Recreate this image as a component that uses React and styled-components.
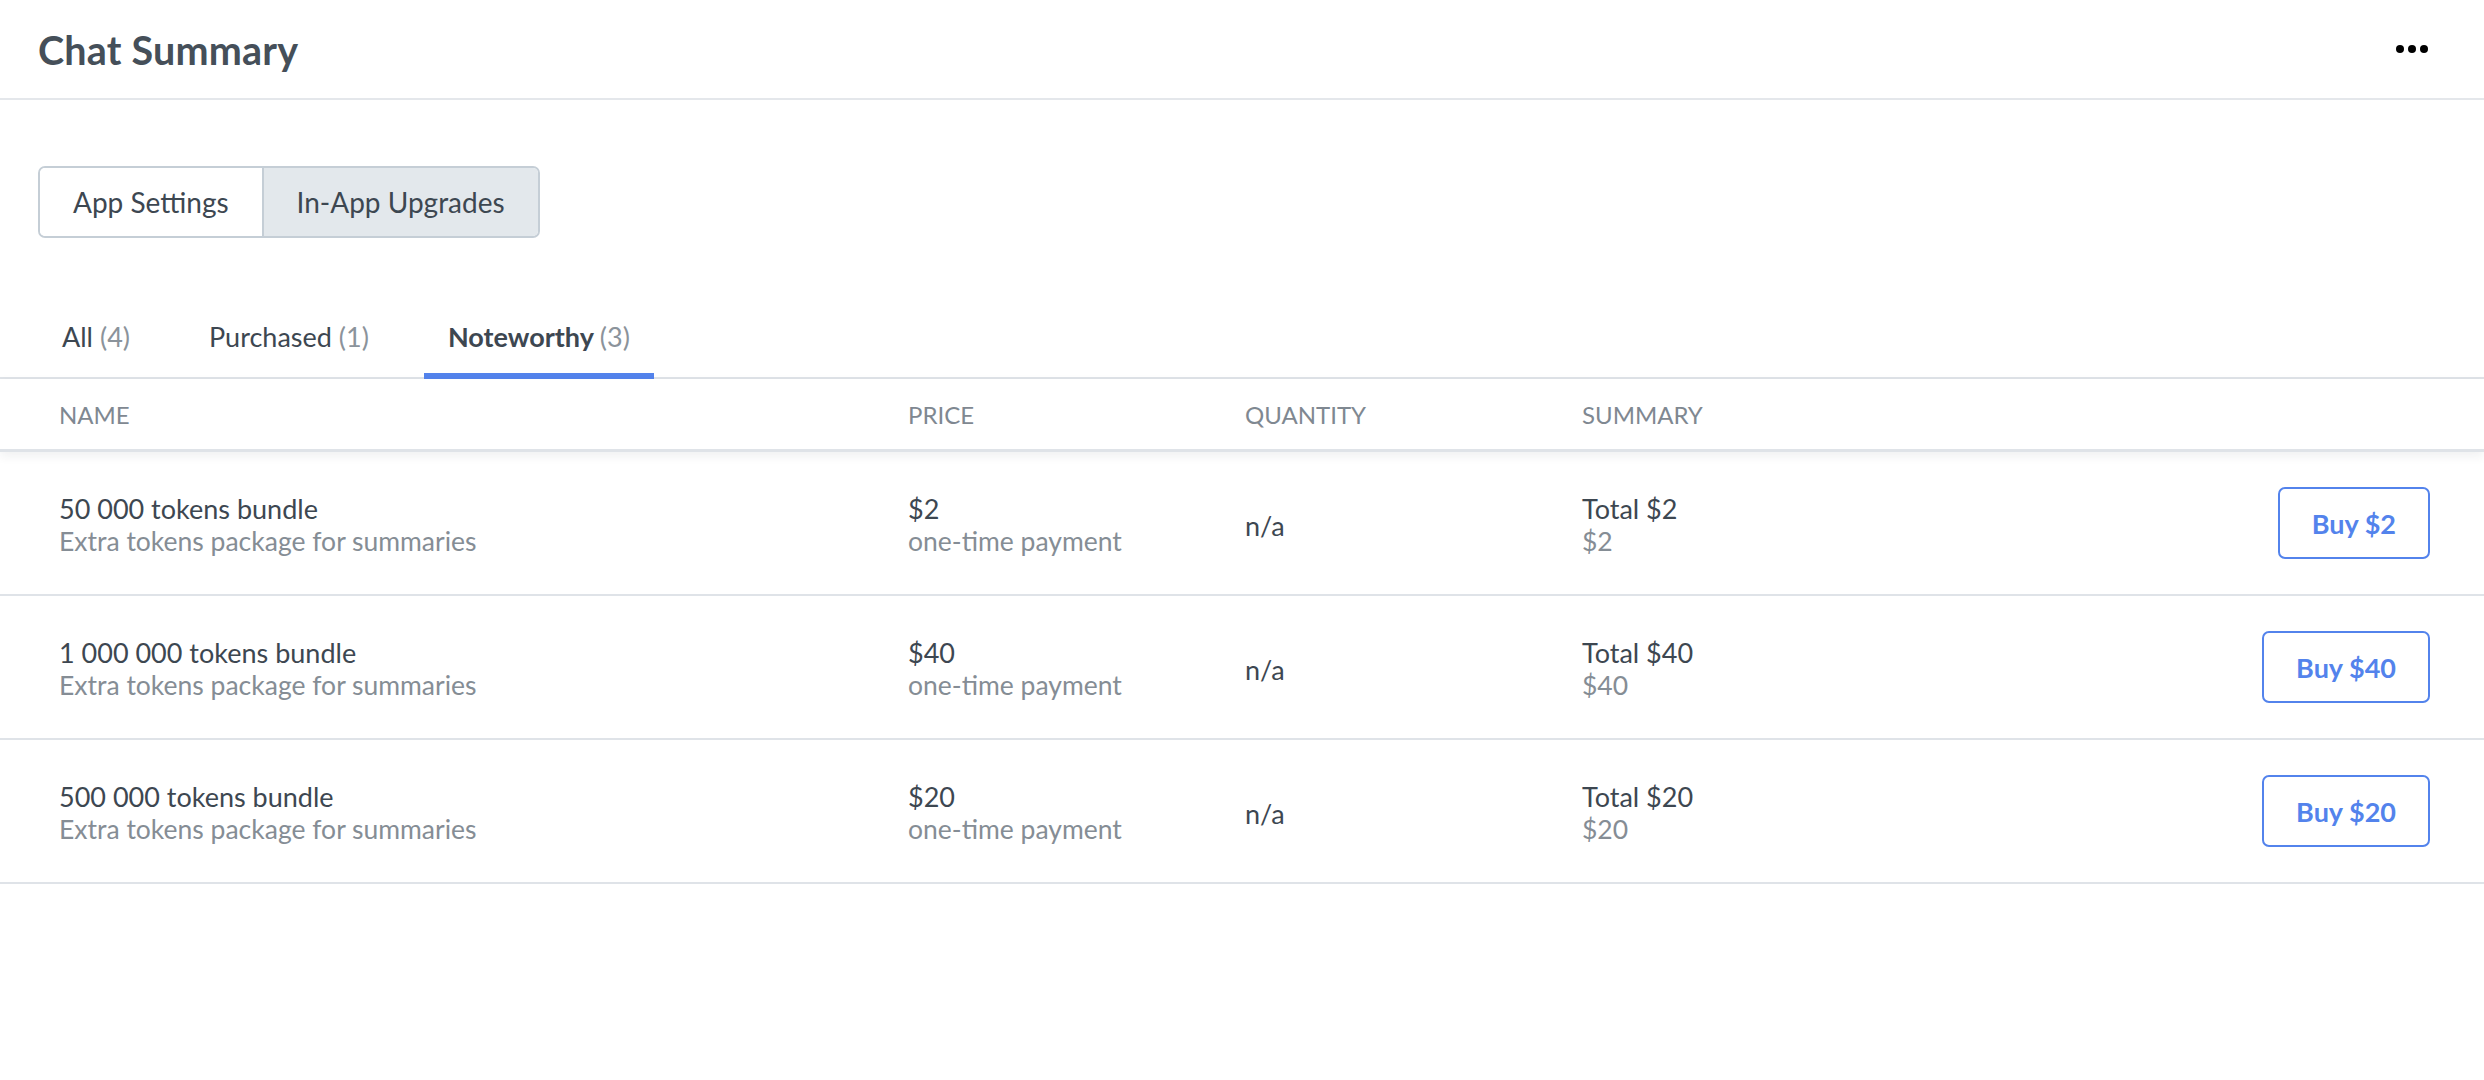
import React, { useState } from 'react';
import styled, { createGlobalStyle } from 'styled-components';

const GlobalStyle = createGlobalStyle`
  body {
    margin: 0;
    background: #ffffff;
    font-family: Lato, "Open Sans", sans-serif;
    color: #3d4751;
  }
`;

const upgrades = [
  { id: 1, name: '50 000 tokens bundle', price: '$2' },
  { id: 2, name: '1 000 000 tokens bundle', price: '$40' },
  { id: 3, name: '500 000 tokens bundle', price: '$20' },
];

const tabs = [
  { key: 'all', label: 'All', count: 4 },
  { key: 'purchased', label: 'Purchased', count: 1 },
  { key: 'noteworthy', label: 'Noteworthy', count: 3 },
];

const DotsIcon = () => (
  <svg width="32" height="8" viewBox="0 0 32 8">
    <circle cx="4" cy="4" r="4" fill="#000" />
    <circle cx="16" cy="4" r="4" fill="#000" />
    <circle cx="28" cy="4" r="4" fill="#000" />
  </svg>
);

const App = () => {
  const [section, setSection] = useState('upgrades');
  const [tab, setTab] = useState('noteworthy');

  return (
    <Page>
      <GlobalStyle />
      <TopBar>
        <Title>Chat Summary</Title>
        <MenuButton aria-label="More">
          <DotsIcon />
        </MenuButton>
      </TopBar>

      <Segments>
        <Segment active={section === 'settings'} onClick={() => setSection('settings')}>
          App Settings
        </Segment>
        <Segment active={section === 'upgrades'} onClick={() => setSection('upgrades')}>
          In-App Upgrades
        </Segment>
      </Segments>

      <TabBar>
        {tabs.map((t) => (
          <Tab key={t.key} active={tab === t.key} onClick={() => setTab(t.key)}>
            {t.label} <Count>({t.count})</Count>
          </Tab>
        ))}
      </TabBar>

      <HeaderRow>
        <HeadCell>Name</HeadCell>
        <HeadCell>Price</HeadCell>
        <HeadCell>Quantity</HeadCell>
        <HeadCell>Summary</HeadCell>
        <span />
      </HeaderRow>

      {upgrades.map((item) => (
        <Row key={item.id}>
          <Cell>
            <Main>{item.name}</Main>
            <Sub>Extra tokens package for summaries</Sub>
          </Cell>
          <Cell>
            <Main>{item.price}</Main>
            <Sub>one-time payment</Sub>
          </Cell>
          <Cell>
            <Main>n/a</Main>
          </Cell>
          <Cell>
            <Main>Total {item.price}</Main>
            <Sub>{item.price}</Sub>
          </Cell>
          <BuyButton>Buy {item.price}</BuyButton>
        </Row>
      ))}
    </Page>
  );
};

export default App;

const Page = styled.div`
  width: 100%;
  min-height: 1080px;
  background: #fff;
`;

const TopBar = styled.header`
  height: 98px;
  display: flex;
  align-items: center;
  justify-content: space-between;
  padding: 0 56px 0 38px;
  border-bottom: 2px solid #e4e7eb;
`;

const Title = styled.h1`
  margin: 0;
  font-size: 39.5px;
  font-weight: 700;
  color: #454f59;
  letter-spacing: 0.2px;
`;

const MenuButton = styled.button`
  border: none;
  background: none;
  padding: 0;
  display: flex;
  cursor: pointer;
`;

const Segments = styled.div`
  display: inline-flex;
  margin: 66px 0 0 38px;
  border: 2px solid #c5ced6;
  border-radius: 7px;
  overflow: hidden;
`;

const Segment = styled.button`
  height: 68px;
  padding: 0 33px;
  border: none;
  border-left: ${(p) => (p.active ? '2px solid #c5ced6' : 'none')};
  background: ${(p) => (p.active ? '#e3e8ec' : '#fff')};
  font-family: inherit;
  font-size: 28px;
  color: #3d4751;
  cursor: pointer;
`;

const TabBar = styled.nav`
  display: flex;
  gap: 31px;
  margin-top: 81px;
  padding-left: 38px;
  border-bottom: 2px solid #dfe3e8;
`;

const Tab = styled.div`
  padding: 0 24px 18px;
  line-height: 36px;
  margin-bottom: -2px;
  font-size: 27px;
  font-weight: ${(p) => (p.active ? 700 : 400)};
  color: #3d4751;
  border-bottom: 6px solid ${(p) => (p.active ? '#5383ec' : 'transparent')};
  cursor: pointer;
`;

const Count = styled.span`
  font-weight: 400;
  color: #8b939b;
`;

const grid = `
  display: grid;
  grid-template-columns: 849px 337px 337px 1fr auto;
  align-items: center;
  padding: 0 54px 0 59px;
`;

const HeaderRow = styled.div`
  ${grid}
  height: 70px;
  border-bottom: 3px solid #dfe3e8;
  box-shadow: 0 4px 10px rgba(30, 40, 60, 0.07);
  position: relative;
`;

const HeadCell = styled.div`
  font-size: 24px;
  text-transform: uppercase;
  color: #7f8891;
`;

const Row = styled.div`
  ${grid}
  height: 142px;
  border-bottom: 2px solid #dfe3e8;
`;

const Cell = styled.div`
  display: flex;
  flex-direction: column;
  padding-top: 4px;
`;

const Main = styled.div`
  font-size: 27px;
  line-height: 33px;
  color: #3d4751;
`;

const Sub = styled.div`
  font-size: 26.5px;
  line-height: 33px;
  color: #858d95;
`;

const BuyButton = styled.button`
  height: 72px;
  padding: 0 32px;
  border: 2px solid #5383ec;
  border-radius: 7px;
  background: #fff;
  color: #5383ec;
  font-family: inherit;
  font-size: 27px;
  font-weight: 700;
  cursor: pointer;
`;
